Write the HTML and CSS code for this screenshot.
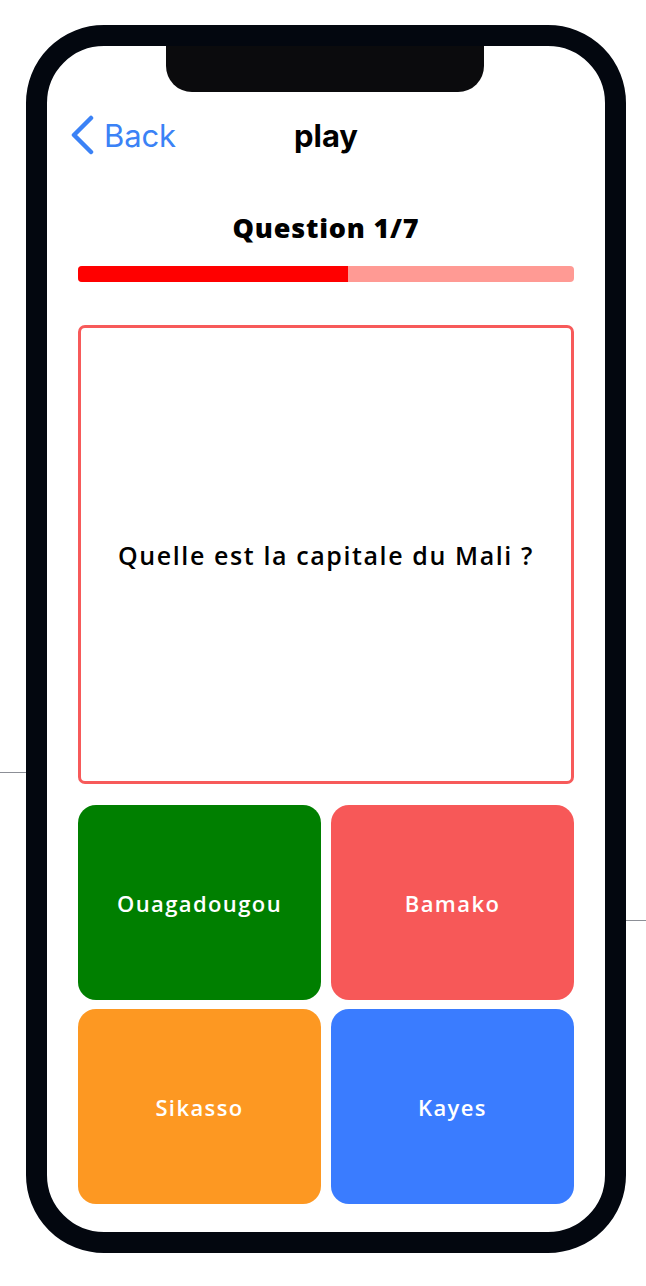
FILE: index.html
```html
<!DOCTYPE html>
<html lang="fr">
<head>
<meta charset="utf-8">
<title>play</title>
<link rel="stylesheet" href="styles.css">
</head>
<body>
<span class="tick tick-left"></span>
<span class="tick tick-right"></span>
<div class="phone">
  <div class="screen">
    <div class="notch"></div>
    <header class="nav">
      <a class="back" href="#">
        <svg class="chev" width="26" height="40" viewBox="0 0 26 40"><path d="M21 3 L4 20 L21 37" fill="none" stroke="currentColor" stroke-width="4.5" stroke-linecap="round" stroke-linejoin="round"/></svg>
        <span>Back</span>
      </a>
      <h1 class="nav-title">play</h1>
      <span></span>
    </header>
    <main class="content">
      <h2 class="q-count">Question 1/7</h2>
      <div class="progress"><div class="progress-fill" style="width:54.5%"></div></div>
      <div class="question-box">
        <p class="question">Quelle est la capitale du Mali ?</p>
      </div>
      <div class="answers">
        <button class="answer green">Ouagadougou</button>
        <button class="answer red">Bamako</button>
        <button class="answer orange">Sikasso</button>
        <button class="answer blue">Kayes</button>
      </div>
    </main>
  </div>
</div>
</body>
</html>
```
FILE: styles.css
```css
* { box-sizing: border-box; }
html, body { margin: 0; padding: 0; background: #ffffff; }
body { width: 646px; height: 1286px; position: relative; overflow: hidden; font-family: "Open Sans", "Noto Sans", sans-serif; }

.tick { position: absolute; height: 1px; background: #8c8f96; }
.tick-left { left: 0; top: 772px; width: 26px; }
.tick-right { left: 626px; top: 920px; width: 20px; }

.phone {
  margin: 25px 0 0 26px;
  width: 600px;
  height: 1228px;
  border: 21px solid #03070f;
  border-radius: 78px;
  background: #ffffff;
}
.screen {
  position: relative;
  height: 100%;
  border-radius: 57px;
  overflow: hidden;
}
.notch {
  position: absolute;
  top: 0;
  left: 119px;
  width: 318px;
  height: 46px;
  background: #0b0b0d;
  border-radius: 0 0 26px 26px;
}

.nav {
  display: grid;
  grid-template-columns: 1fr auto 1fr;
  align-items: center;
  height: 44px;
  margin-top: 67px;
  padding: 0 23px;
}
.back {
  display: flex;
  align-items: center;
  gap: 8px;
  color: #3b82f6;
  text-decoration: none;
  font-family: "Inter", "Liberation Sans", sans-serif;
  font-size: 31px;
  font-weight: 400;
  letter-spacing: -0.1px;
}
.chev { display: block; }
.nav-title {
  margin: 0;
  font-family: "Inter", "Liberation Sans", sans-serif;
  font-size: 31px;
  font-weight: 700;
  color: #000;
}

.content { padding: 0 31px; }
.q-count {
  margin: 55px 0 0;
  height: 32px;
  line-height: 32px;
  text-align: center;
  font-size: 27px;
  font-weight: 800;
  letter-spacing: 0.8px;
  color: #000;
}
.progress {
  margin-top: 22px;
  height: 16px;
  background: #ff9a94;
  border-radius: 4px;
  overflow: hidden;
}
.progress-fill { height: 100%; background: #ff0000; }

.question-box {
  margin-top: 43px;
  height: 459px;
  border: 3px solid #f75a5a;
  border-radius: 7px;
  display: flex;
  align-items: center;
  justify-content: center;
}
.question {
  margin: 0;
  font-size: 25px;
  font-weight: 600;
  color: #000;
  letter-spacing: 1.6px;
}

.answers {
  margin-top: 21px;
  display: grid;
  grid-template-columns: 1fr 1fr;
  grid-auto-rows: 195px;
  column-gap: 10px;
  row-gap: 9px;
}
.answer {
  border: none;
  border-radius: 18px;
  color: #fff;
  font-family: "Open Sans", "Noto Sans", sans-serif;
  font-size: 22px;
  font-weight: 600;
  letter-spacing: 1.4px;
}
.green { background: #007f00; }
.red { background: #f75858; }
.orange { background: #fd9822; }
.blue { background: #3a7cff; }
```
